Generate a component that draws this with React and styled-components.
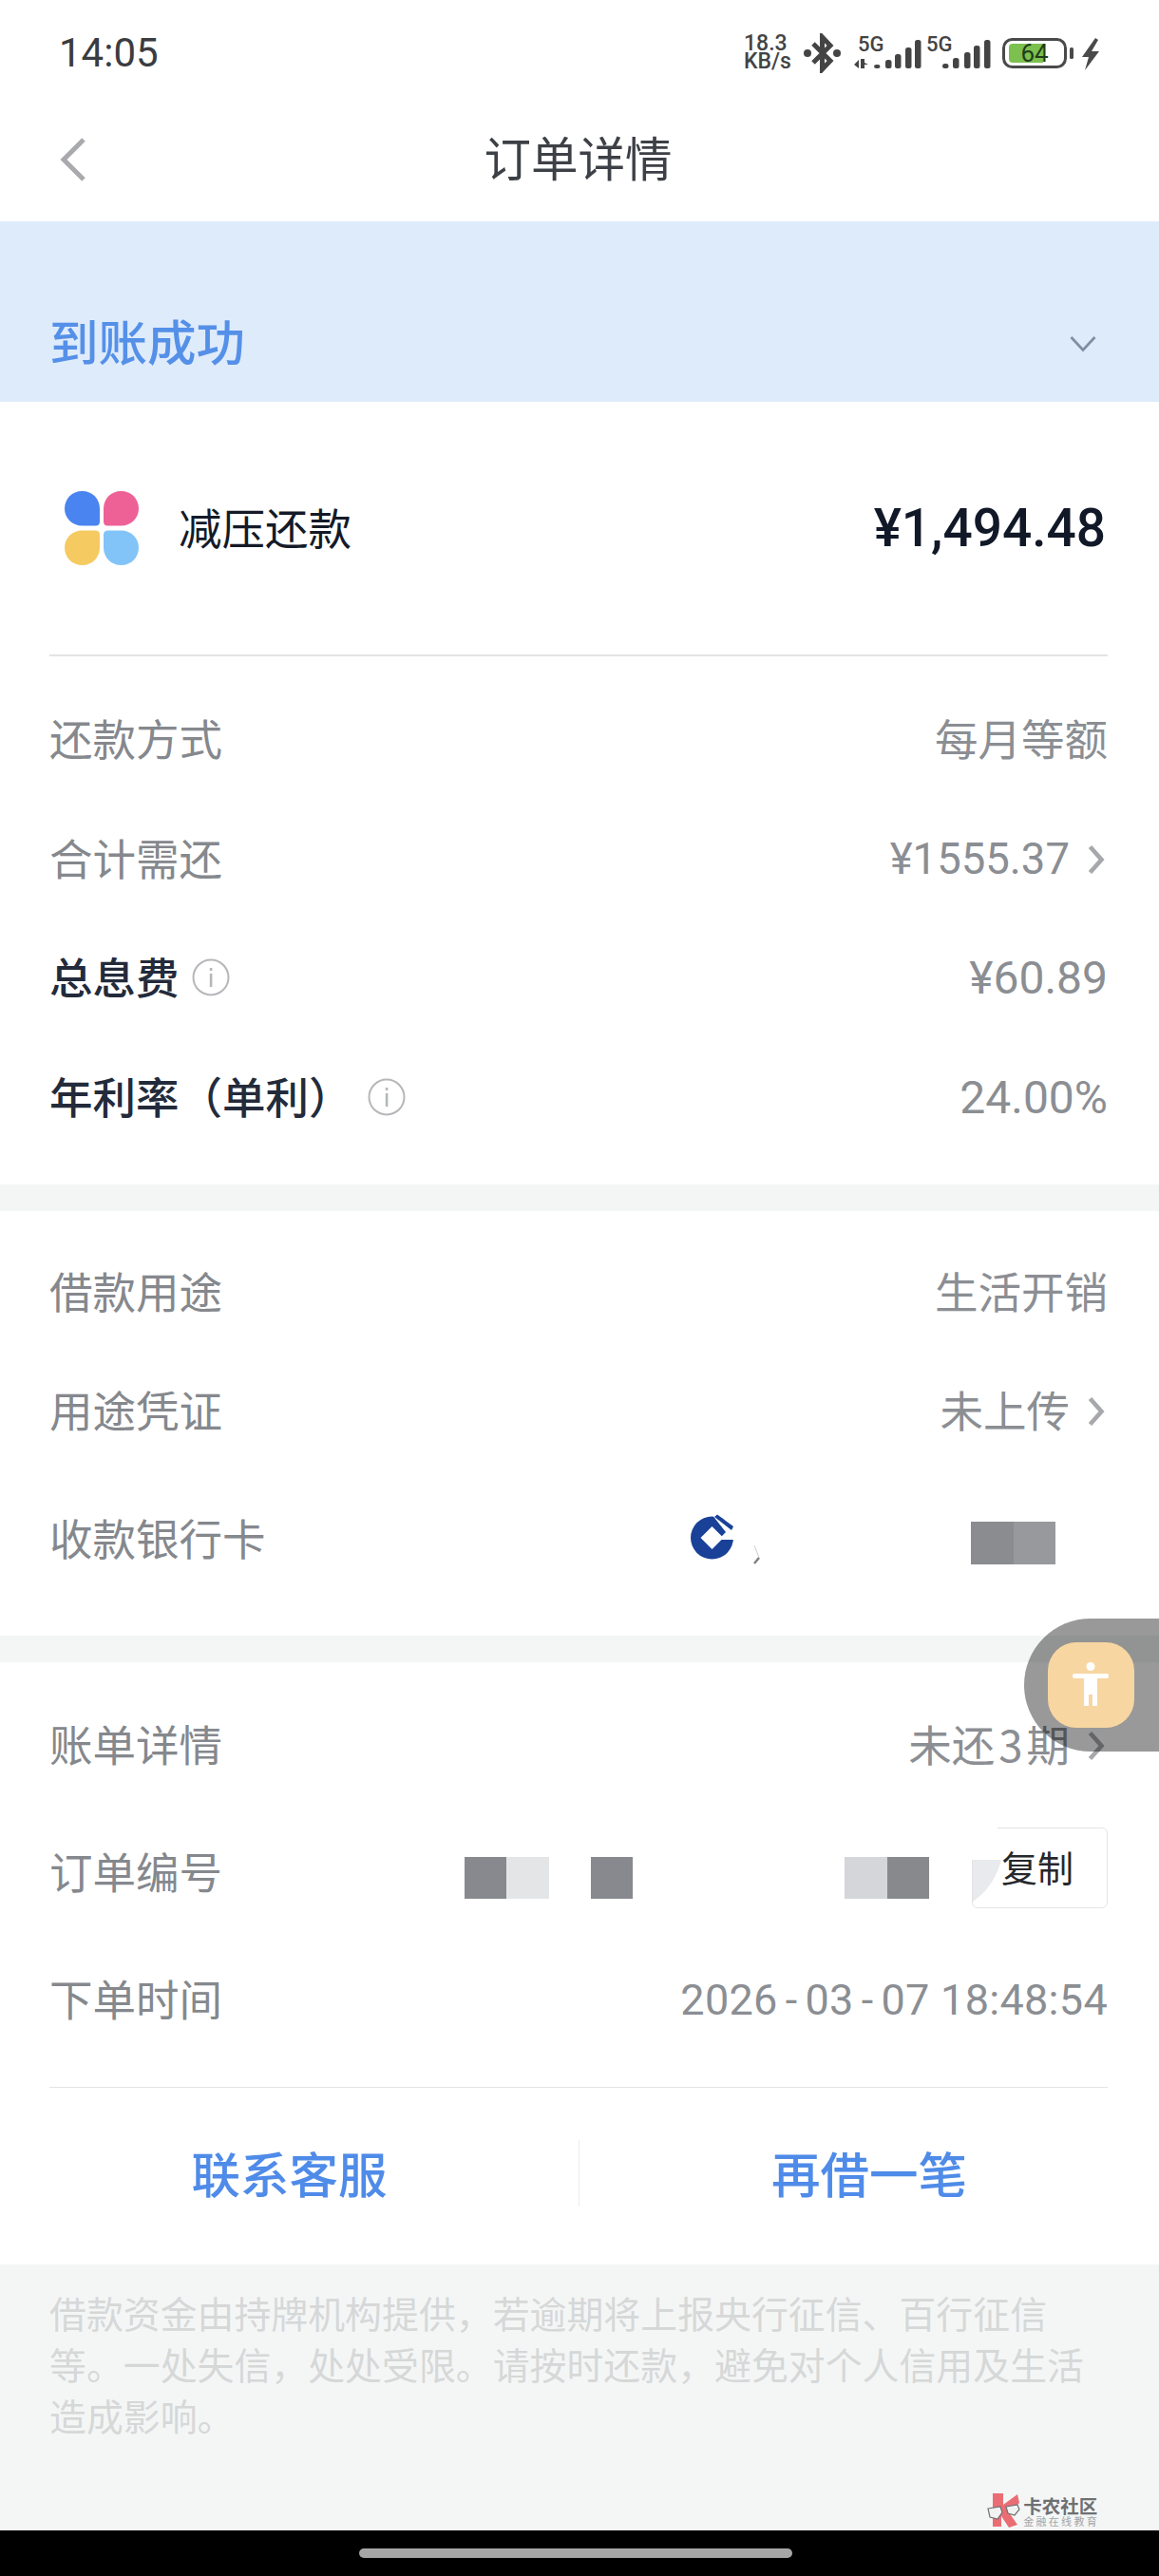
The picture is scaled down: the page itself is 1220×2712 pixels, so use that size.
import React from 'react';
import styled, { createGlobalStyle } from 'styled-components';

const SANS = `Roboto, "Noto Sans CJK SC", sans-serif`;

const Global = createGlobalStyle`
  html, body { margin: 0; padding: 0; background: #fff; }
  body { font-family: ${SANS}; }
  * { box-sizing: border-box; }
`;

const Page = styled.div`
  position: relative;
  width: 1220px;
  height: 2712px;
  overflow: hidden;
  background: #fff;
  display: flex;
  flex-direction: column;
`;

const StatusBar = styled.div`
  height: 104px;
  padding: 30px 62px 0 62px;
  display: flex;
  justify-content: space-between;
  align-items: flex-start;
  flex: none;
`;
const Time = styled.div`
  font-size: 42px;
  line-height: 50px;
  font-weight: 400;
  color: #3a3c40;
  margin-top: 1px;
`;
const StatusIcons = styled.div`
  display: flex;
  align-items: flex-start;
  margin-top: 5px;
`;
const Speed = styled.div`
  width: 63px;
  font-size: 23px;
  line-height: 19px;
  font-weight: 500;
  color: #444;
  padding-top: 1px;
  white-space: nowrap;
`;
const StatusGlyph = styled.svg`
  display: block;
  flex: none;
  margin-left: ${p => p.$ml || 0}px;
`;

const NavBar = styled.div`
  position: relative;
  height: 129px;
  flex: none;
  display: flex;
  align-items: center;
  justify-content: center;
`;
const BackIcon = styled.svg`
  position: absolute;
  left: 62px;
  top: 41px;
`;
const Title = styled.div`
  font-size: 49.5px;
  line-height: 70px;
  color: #3d4046;
  font-family: "Noto Sans CJK SC", sans-serif;
  font-weight: 400;
  margin: 0 3px 7px 0;
`;

const Banner = styled.div`
  height: 190px;
  flex: none;
  background: #deebfb;
  padding: 90px 54px 0 52px;
  display: flex;
  justify-content: space-between;
  align-items: flex-start;
`;
const BannerText = styled.div`
  font-size: 51.5px;
  line-height: 70px;
  color: #5590e8;
  font-family: "Noto Sans CJK SC", sans-serif;
  font-weight: 500;
`;
const BannerChevron = styled.svg`
  margin-top: 30px;
  margin-right: 12px;
`;

const Product = styled.div`
  height: 266px;
  flex: none;
  display: flex;
  align-items: center;
  padding: 0 56px 0 68px;
`;
const ProductName = styled.div`
  margin: 0 0 5px 42px;
  font-size: 45.5px;
  color: #141a28;
  font-family: "Noto Sans CJK SC", sans-serif;
  line-height: 60px;
`;
const Amount = styled.div`
  margin-left: auto;
  font-size: 55px;
  line-height: 70px;
  font-weight: 500;
  color: #111827;
`;
const Divider = styled.div`
  height: 1.5px;
  flex: none;
  margin: 0 54px 0 52px;
  background: #e2e3e5;
`;

const Section = styled.div`
  flex: none;
  display: flex;
  flex-direction: column;
  padding: ${p => p.$pt}px 54px ${p => p.$pb}px 52px;
`;
const Band = styled.div`
  height: 28px;
  flex: none;
  background: #f4f6f6;
`;
const Row = styled.div`
  height: ${p => p.$h}px;
  display: flex;
  align-items: center;
  font-size: 45px;
  color: #85888d;
`;
const Label = styled.div`
  font-family: "Noto Sans CJK SC", sans-serif;
  font-size: 45.5px;
  color: ${p => (p.$strong ? '#232b3b' : '#85888d')};
  font-weight: ${p => (p.$strong ? 500 : 400)};
  line-height: 60px;
  padding-bottom: 8px;
`;
const Value = styled.div`
  margin-left: auto;
  display: flex;
  align-items: center;
  color: #8b8e93;
  line-height: 60px;
  white-space: nowrap;
  font-weight: 400;
  padding-bottom: 2px;
`;
const Num = styled.span`
  font-size: ${p => p.$size}px;
`;
const Cjk = styled.span`
  display: block;
  font-family: "Noto Sans CJK SC", sans-serif;
  font-size: 45.5px;
  padding-bottom: 6px;
`;
const Digit = styled.span`
  padding: 0 4px;
`;
const Stamp = styled.span`
  letter-spacing: 0.3px;
`;
const Hyphen = styled.span`
  padding: 0 8px;
`;
const ChevronRight = styled.svg`
  margin: 0 3px 0 19px;
  flex: none;
`;
const InfoIcon = styled.svg`
  margin-left: ${p => p.$ml}px;
  margin-bottom: 4px;
  flex: none;
`;

const Mosaic = styled.div`
  display: flex;
  flex: none;
  margin-left: ${p => p.$ml || 0}px;
  margin-top: ${p => p.$mt || 0}px;
`;
const Cell = styled.div`
  width: ${p => p.$w}px;
  height: ${p => p.$h || 44}px;
  background: ${p => p.$c};
`;
const BankRight = styled.div`
  margin-left: auto;
  margin-right: 55px;
  display: flex;
  align-items: center;
`;
const BankMark = styled.svg`
  flex: none;
  margin-bottom: 8px;
`;
const SmallMark = styled.svg`
  flex: none;
  margin: 30px 0 0 20px;
`;

const OrderRight = styled.div`
  margin-left: auto;
  display: flex;
  align-items: center;
`;
const CopyButton = styled.div`
  position: relative;
  width: 143px;
  height: 85px;
  margin: 0 0 12px 45px;
  border: 1.5px solid #e3e4e6;
  border-radius: 6px;
  background: #fff;
  display: flex;
  align-items: center;
  justify-content: flex-end;
  padding: 0 35px 4px 0;
  font-family: "Noto Sans CJK SC", sans-serif;
  font-size: 38px;
  color: #26282c;
`;
const CopyPatch = styled.svg`
  position: absolute;
  left: -2px;
  top: -2px;
`;

const Actions = styled.div`
  height: 186px;
  flex: none;
  display: grid;
  grid-template-columns: 609px 1px 1fr;
  align-items: center;
`;
const ActionBtn = styled.div`
  text-align: center;
  font-family: "Noto Sans CJK SC", sans-serif;
  font-size: 51.5px;
  font-weight: 500;
  line-height: 70px;
  color: #4f8be8;
  padding-bottom: 8px;
`;
const ActionSep = styled.div`
  width: 1px;
  height: 70px;
  margin-bottom: 7px;
  background: #ececee;
`;

const Footer = styled.div`
  position: relative;
  flex: 1;
  background: #f4f6f6;
  padding: 22.5px 40px 0 52px;
  font-family: "Noto Sans CJK SC", sans-serif;
  font-size: 38.9px;
  line-height: 54px;
  color: #d6d8d8;
`;
const NavArea = styled.div`
  height: 48px;
  flex: none;
  background: #000;
  display: flex;
  justify-content: center;
  padding-top: 19px;
`;
const HomeBar = styled.div`
  width: 456px;
  height: 10px;
  margin-right: 8px;
  border-radius: 5px;
  background: #a6a6a6;
`;

const Watermark = styled.div`
  position: absolute;
  right: 63px;
  bottom: 3px;
  display: flex;
  align-items: flex-end;
`;
const WatermarkText = styled.div`
  margin-left: 2px;
  display: flex;
  flex-direction: column;
  align-items: flex-start;
`;
const WatermarkMain = styled.div`
  font-size: 19.5px;
  line-height: 21px;
  font-weight: 700;
  color: #6f7072;
  white-space: nowrap;
`;
const WatermarkSub = styled.div`
  font-size: 11px;
  line-height: 13px;
  color: #a3a5a7;
  letter-spacing: 2.3px;
  white-space: nowrap;
`;

const FloatPill = styled.div`
  position: absolute;
  right: 0;
  top: 1704px;
  width: 142px;
  height: 140px;
  border-radius: 70px 0 0 70px;
  background: rgba(0, 0, 0, 0.4);
`;
const FloatButton = styled.div`
  position: absolute;
  left: 25px;
  top: 25px;
  width: 91px;
  height: 90px;
  border-radius: 30px;
  background: #f7d6a1;
  display: flex;
  align-items: center;
  justify-content: center;
`;

function Chevron() {
  return (
    <ChevronRight width="18" height="32" viewBox="0 0 18 32">
      <path d="M2.5 2.5 L14.5 16 L2.5 29.5" fill="none" stroke="#a6a8ac" strokeWidth="4.6" />
    </ChevronRight>
  );
}

function Info({ ml }) {
  return (
    <InfoIcon $ml={ml} width="40" height="40" viewBox="0 0 40 40">
      <circle cx="20" cy="20" r="18.5" fill="none" stroke="#b5b7ba" strokeWidth="2" />
      <rect x="18.8" y="16" width="2.6" height="14" fill="#b5b7ba" />
      <rect x="18.8" y="10" width="2.6" height="3" fill="#b5b7ba" />
    </InfoIcon>
  );
}

const PETAL = 'M18.5 0 C29 0 37 8 37 18.5 V32 Q37 36.5 32.5 36.5 H18.5 C8 36.5 0 28.5 0 18.5 C0 8 8 0 18.5 0 Z';

function ProductLogo() {
  return (
    <svg width="78" height="78" viewBox="0 0 78 78" style={{ flex: 'none' }}>
      <path d={PETAL} fill="#4a84f0" />
      <path d={PETAL} fill="#ee6197" transform="translate(78 0) scale(-1 1)" />
      <path d={PETAL} fill="#f5ca60" transform="translate(0 78) scale(1 -1)" />
      <path d={PETAL} fill="#82c4f8" transform="translate(78 78) scale(-1 -1)" />
    </svg>
  );
}

function BankLogo() {
  return (
    <BankMark width="46" height="48" viewBox="0 0 46 48">
      <circle cx="22.5" cy="25" r="22.5" fill="#1a4198" />
      <path d="M22.5 13 L34.5 25 L22.5 37 L10.5 25 Z" fill="#fff" />
      <path d="M22 0 H46 V27 H29 L37 19 Z" fill="#fff" />
      <path d="M25 3 L28 0.5 L45 13 L43 17 Z" fill="#1a4198" />
    </BankMark>
  );
}

function PersonIcon() {
  return (
    <svg width="40" height="48" viewBox="0 0 40 48">
      <circle cx="19" cy="4.5" r="4.5" fill="#fff" />
      <rect x="0" y="12" width="38" height="5" rx="2" fill="#fff" />
      <path d="M12 16 H26 V46 H21 V34 H17 V46 H12 Z" fill="#fff" />
    </svg>
  );
}

function SignalOne() {
  const bars = [[21, 26], [33, 21], [43, 15], [54, 8], [64, 0]];
  return (
    <StatusGlyph $ml={13} width="72" height="42" viewBox="0 0 72 42">
      <text x="4" y="19" fontFamily="Roboto, sans-serif" fontWeight="500" fontSize="22" fill="#444">5G</text>
      <path d="M0 33 L5 28 V37 Z M7 27 H11 V31 L15 33 H11 V37 H7 Z" fill="#444" />
      {bars.map(([x, y]) => (
        <rect key={x} x={x} y={y + 7} width="6.5" height={30 - y} rx="2.5" fill="#444" />
      ))}
    </StatusGlyph>
  );
}

function SignalTwo() {
  const bars = [[17, 25], [28, 19], [40, 13], [50, 6], [61, 0]];
  return (
    <StatusGlyph $ml={4} width="68" height="42" viewBox="0 0 68 42">
      <text x="0" y="19" fontFamily="Roboto, sans-serif" fontWeight="500" fontSize="22" fill="#444">5G</text>
      {bars.map(([x, y]) => (
        <rect key={x} x={x} y={y + 7} width="6.5" height={30 - y} rx="2.5" fill="#444" />
      ))}
    </StatusGlyph>
  );
}

function Battery() {
  return (
    <StatusGlyph $ml={12} width="76" height="42" viewBox="0 0 76 42">
      <rect x="1.5" y="6.5" width="65" height="29" rx="9" fill="none" stroke="#4a4a4a" strokeWidth="3" />
      <path d="M11 11 H43 V31 H11 Q7 31 7 27 V15 Q7 11 11 11 Z" fill="#7cc04f" />
      <text x="34" y="30" textAnchor="middle" fontFamily="Roboto, sans-serif" fontSize="26" fill="#1f3d1a">64</text>
      <rect x="71" y="15" width="4" height="12" rx="1.5" fill="#4a4a4a" />
    </StatusGlyph>
  );
}

export default function App() {
  return (
    <Page>
      <Global />
      <StatusBar>
        <Time>14:05</Time>
        <StatusIcons>
          <Speed>18.3<br />KB/s</Speed>
          <StatusGlyph width="40" height="42" viewBox="0 0 40 42">
            <path d="M10 11 L28 29 L19.5 38 V4 L28 13 L10 31" fill="none" stroke="#444" strokeWidth="5" />
            <circle cx="4" cy="21" r="4" fill="#444" />
            <circle cx="35" cy="21" r="4" fill="#444" />
          </StatusGlyph>
          <SignalOne />
          <SignalTwo />
          <Battery />
          <StatusGlyph $ml={7} width="20" height="42" viewBox="0 0 20 42">
            <path d="M15 5 L1 25 H8 L4 39 L19 19 H11 L18 7 Z" fill="#4a4a4a" />
          </StatusGlyph>
        </StatusIcons>
      </StatusBar>

      <NavBar>
        <BackIcon width="30" height="46" viewBox="0 0 30 46">
          <path d="M26 2 L5 23 L26 44" fill="none" stroke="#a9aaad" strokeWidth="5" />
        </BackIcon>
        <Title>订单详情</Title>
      </NavBar>

      <Banner>
        <BannerText>到账成功</BannerText>
        <BannerChevron width="28" height="18" viewBox="0 0 28 18">
          <path d="M1.5 2 L14 15.5 L26.5 2" fill="none" stroke="#7f8fa3" strokeWidth="2.8" />
        </BannerChevron>
      </Banner>

      <Product>
        <ProductLogo />
        <ProductName>减压还款</ProductName>
        <Amount>¥1,494.48</Amount>
      </Product>
      <Divider />

      <Section $pt={27} $pb={27}>
        <Row $h={125.5}>
          <Label>还款方式</Label>
          <Value><Cjk>每月等额</Cjk></Value>
        </Row>
        <Row $h={125.5}>
          <Label>合计需还</Label>
          <Value><Num $size={45.5}>¥1555.37</Num><Chevron /></Value>
        </Row>
        <Row $h={125.5}>
          <Label $strong>总息费</Label>
          <Info ml={13} />
          <Value><Num $size={48}>¥60.89</Num></Value>
        </Row>
        <Row $h={125.5}>
          <Label $strong>年利率（单利）</Label>
          <Info ml={16} />
          <Value><Num $size={48}>24.00%</Num></Value>
        </Row>
      </Section>
      <Band />

      <Section $pt={25} $pb={27}>
        <Row $h={125}>
          <Label>借款用途</Label>
          <Value><Cjk>生活开销</Cjk></Value>
        </Row>
        <Row $h={125}>
          <Label>用途凭证</Label>
          <Value><Cjk>未上传</Cjk><Chevron /></Value>
        </Row>
        <Row $h={145}>
          <Label>收款银行卡</Label>
          <BankRight>
            <BankLogo />
            <SmallMark width="8" height="22" viewBox="0 0 8 22">
              <path d="M1 1 L6 14" stroke="#cfd0d2" strokeWidth="1" fill="none" />
              <path d="M1 20 L6 14" stroke="#808184" strokeWidth="2.5" fill="none" />
            </SmallMark>
            <Mosaic $ml={221} $mt={4}>
              <Cell $w={45} $h={45} $c="#8b8c90" />
              <Cell $w={44} $h={45} $c="#98999d" />
            </Mosaic>
          </BankRight>
        </Row>
      </Section>
      <Band />

      <Section $pt={22} $pb={23}>
        <Row $h={134}>
          <Label>账单详情</Label>
          <Value><Cjk>未还<Digit>3</Digit>期</Cjk><Chevron /></Value>
        </Row>
        <Row $h={134}>
          <Label>订单编号</Label>
          <OrderRight>
            <Mosaic $mt={8}>
              <Cell $w={44.5} $c="#88898e" />
              <Cell $w={44.5} $c="#e4e5e7" />
            </Mosaic>
            <Mosaic $ml={44} $mt={8}>
              <Cell $w={44.5} $c="#88898e" />
            </Mosaic>
            <Mosaic $ml={223} $mt={8}>
              <Cell $w={44.5} $c="#d5d6d9" />
              <Cell $w={44.5} $c="#88898c" />
            </Mosaic>
            <CopyButton>
              <CopyPatch width="34" height="82" viewBox="0 0 34 82">
                <rect x="0" y="0" width="28" height="35" fill="#fff" />
                <path d="M2 35 H32 Q24 64 2 79 Z" fill="#e9eaed" />
              </CopyPatch>
              复制
            </CopyButton>
          </OrderRight>
        </Row>
        <Row $h={134}>
          <Label>下单时间</Label>
          <Value>
            <Stamp>2026<Hyphen>-</Hyphen>03<Hyphen>-</Hyphen>07 18:48:54</Stamp>
          </Value>
        </Row>
      </Section>
      <Divider />

      <Actions>
        <ActionBtn>联系客服</ActionBtn>
        <ActionSep />
        <ActionBtn>再借一笔</ActionBtn>
      </Actions>

      <Footer>
        借款资金由持牌机构提供，若逾期将上报央行征信、百行征信<br />
        等。一处失信，处处受限。请按时还款，避免对个人信用及生活<br />
        造成影响。
        <Watermark>
          <svg width="36" height="36" viewBox="0 0 36 36" style={{ flex: 'none' }}>
            <path d="M6 0 H17 V12 L32 1 L34 10 L23 20 L32 33 L23 36 L15 24 V35 H6 Z" fill="#ea6d74" />
            <path d="M1 16 L14 14 L16 20 L11 27 L3 25 Z" fill="#f1f3f3" stroke="#6f7072" strokeWidth="1.2" />
            <path d="M20 14 L32 12 L34 17 L29 23 L22 21 Z" fill="#f1f3f3" stroke="#6f7072" strokeWidth="1.2" />
          </svg>
          <WatermarkText>
            <WatermarkMain>卡农社区</WatermarkMain>
            <WatermarkSub>金融在线教育</WatermarkSub>
          </WatermarkText>
        </Watermark>
      </Footer>
      <NavArea>
        <HomeBar />
      </NavArea>

      <FloatPill>
        <FloatButton>
          <PersonIcon />
        </FloatButton>
      </FloatPill>
    </Page>
  );
}
